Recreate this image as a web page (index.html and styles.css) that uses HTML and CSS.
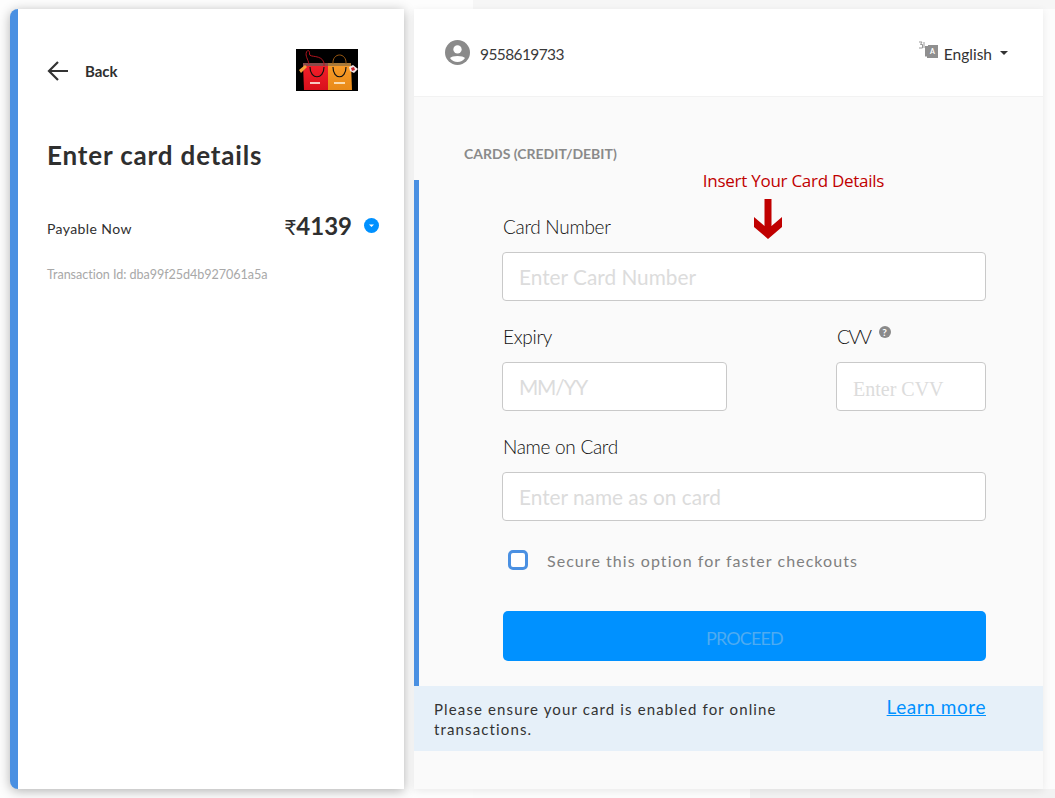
FILE: index.html
```html
<!DOCTYPE html>
<html lang="en">
<head>
<meta charset="utf-8">
<title>Enter card details</title>
<link rel="stylesheet" href="styles.css">
</head>
<body>
<div class="backdrop"></div>
<main class="page">
  <aside class="summary">
    <div class="summary-top">
      <a class="back">
        <svg class="back-icon" viewBox="0 0 22 20" width="22" height="20"><path d="M21 10H2M11 1 2 10l9 9" fill="none" stroke="#333" stroke-width="2.2"/></svg>
        <span>Back</span>
      </a>
      <svg class="logo" viewBox="0 0 62 42" width="62" height="42">
        <defs>
          <linearGradient id="red" x1="0" y1="0" x2="0" y2="1"><stop offset="0" stop-color="#f5202a"/><stop offset="1" stop-color="#d8101c"/></linearGradient>
          <linearGradient id="org" x1="0" y1="0" x2="0" y2="1"><stop offset="0" stop-color="#fa9c28"/><stop offset="1" stop-color="#e88a18"/></linearGradient>
        </defs>
        <rect width="62" height="42" fill="#000"/>
        <path d="M7 15H32V41H8Z" fill="url(#red)"/>
        <path d="M32 15H55L56 41H32Z" fill="url(#org)"/>
        <path d="M7 14H32V17H7Z" fill="#8a4a4a"/>
        <path d="M32 14H55V17H32Z" fill="#a8793a"/>
        <path d="M13 15C12 10 9 7 10.500 3 12 0 14 2 13.500 5 13 9 26 5 28 14V17" fill="none" stroke="#b3141e" stroke-width="1"/>
        <path d="M37 15C36 3 51 3 50 15" fill="none" stroke="#9c5a12" stroke-width="1"/>
        <path d="M14 18C14 31 28 31 28 18M37 18C37 31 50 31 50 18" fill="none" stroke="#111" stroke-width="1.200"/>
        <path d="M3 21 9 16 11 18 5 24Z" fill="#f2a33c"/>
        <path d="M53 18 57 16 62 20 58 24 54 22Z" fill="#f4e6e6"/>
        <path d="M55 19 58 18 59 21 56 22Z" fill="#c8222a"/>
        <path d="M14 33H24V35H14Z" fill="#f7c9c4"/>
        <path d="M38 33H49V35H38Z" fill="#fbdcae"/>
      </svg>
    </div>
    <h1 class="summary-title">Enter card details</h1>
    <div class="amount-row">
      <span class="amount-label">Payable Now</span>
      <span class="amount-value"><span class="rupee">₹</span>4139</span>
      <span class="amount-toggle"><svg viewBox="0 0 15 15" width="15" height="15"><circle cx="7.500" cy="7.500" r="7.500" fill="#0091ff"/><path d="M5 6.500h5L7.500 9Z" fill="#fff"/></svg></span>
    </div>
    <p class="txn">Transaction Id: dba99f25d4b927061a5a</p>
  </aside>

  <section class="checkout">
    <header class="checkout-head">
      <div class="user">
        <svg viewBox="0 0 24 24" width="25" height="25"><circle cx="12" cy="12" r="12" fill="#8a8a8a"/><circle cx="12" cy="9" r="4" fill="#fff"/><path d="M4.800 17.200C6.500 14.600 17.500 14.600 19.200 17.200 17.500 19.800 15 21 12 21S6.500 19.800 4.800 17.200Z" fill="#fff"/></svg>
        <span>9558619733</span>
      </div>
      <div class="lang">
        <svg class="lang-icon" viewBox="0 0 20 18" width="20" height="18">
          <path d="M1 1H4L2.500 3.500H4.500V7H1M6 1V7" fill="none" stroke="#999" stroke-width="1"/>
          <path d="M7 5H10V4H20V17H9V15.500H7Z" fill="#8f8f8f"/>
          <text class="lang-a" x="14.500" y="13">A</text>
        </svg>
        <span>English</span>
        <span class="caret"></span>
      </div>
    </header>
    <div class="checkout-body">
      <h2 class="method">CARDS (CREDIT/DEBIT)</h2>
      <form class="card-form">
        <div class="hint">
          <span>Insert Your Card Details</span>
          <svg viewBox="0 0 28 40" width="28" height="40"><path d="M10.500 0H17.500V27L28 18V28L14 40 0 28V18L10.500 27Z" fill="#c00000"/></svg>
        </div>
        <label class="field-label" for="num">Card Number</label>
        <input class="field" id="num" placeholder="Enter Card Number">
        <div class="pair">
          <div class="pair-exp">
            <label class="field-label" for="exp">Expiry</label>
            <input class="field field-tight" id="exp" placeholder="MM/YY">
          </div>
          <div class="pair-cvv">
            <label class="field-label" for="cvv"><span class="cvv-text">CVV</span><span class="help">?</span></label>
            <input class="field field-serif" id="cvv" placeholder="Enter CVV">
          </div>
        </div>
        <label class="field-label" for="name">Name on Card</label>
        <input class="field" id="name" placeholder="Enter name as on card">
        <div class="save">
          <span class="box"></span>
          <span>Secure this option for faster checkouts</span>
        </div>
        <button class="proceed" type="button">PROCEED</button>
      </form>
      <div class="notice">
        <p>Please ensure your card is enabled for online transactions.</p>
        <a class="learn">Learn more</a>
      </div>
    </div>
  </section>
</main>
</body>
</html>
```

FILE: styles.css
```css
* { box-sizing: border-box; }
html, body { margin: 0; height: 798px; overflow: hidden; }
body { background: linear-gradient(#f6f6f6 0 9px, transparent 9px), linear-gradient(to right, transparent 750px, #f2f2f2 750px) bottom / 100% 9px no-repeat, #fcfcfc; font-family: Lato, "Noto Sans", sans-serif; color: #2f2f2f; position: relative; }
.backdrop { position: absolute; left: 0; top: 0; width: 473px; height: 100%; background: #fdfdfd; }
.page { position: relative; display: flex; gap: 10px; height: 780px; margin: 9px 13px 9px 10px; }

.summary { width: 394px; flex: none; background: #fff; border-left: 8px solid #4a90e2; border-radius: 8px 0 0 8px; padding: 0 25px 0 29px; box-shadow: 0 2px 12px rgba(0,0,0,.3); }
.summary-top { display: flex; justify-content: space-between; height: 82px; padding-top: 40px; align-items: flex-start; padding-right: 21px; }
.back { display: flex; align-items: center; gap: 16px; font-size: 15px; font-weight: 700; height: 43px; }
.logo { display: block; }
.summary-title { margin: 46px 0 0; font-size: 26px; font-weight: 700; line-height: 36px; letter-spacing: .85px; }
.amount-row { display: flex; align-items: center; margin-top: 37px; height: 30px; }
.amount-label { font-size: 14px; flex: 1; letter-spacing: .4px; padding-top: 7px; }
.amount-value { font-size: 24px; font-weight: 700; }
.rupee { font-size: 21px; font-weight: 400; }
.amount-toggle { margin-left: 12px; display: flex; }
.txn { margin: 26px 0 0; font-size: 12.600px; color: #a8a8a8; font-weight: 400; letter-spacing: -.05px; line-height: 18px; }

.checkout { flex: 1; background: #fafafa; display: flex; flex-direction: column; box-shadow: 0 2px 8px rgba(0,0,0,.08); }
.checkout-head { height: 88px; flex: none; background: #fff; border-bottom: 1px solid #f2f2f2; display: flex; align-items: center; justify-content: space-between; padding: 2px 35px 0 31px; }
.user { display: flex; align-items: center; gap: 10px; font-size: 15.500px; letter-spacing: -.6px; color: #3a3a3a; }
.user svg { display: block; margin-top: -3px; }
.lang { display: flex; align-items: center; font-size: 15.500px; color: #333; }
.lang-icon { display: block; margin: -7px 6px 0 0; }
.lang-a { font: 700 7px Lato, sans-serif; fill: #fff; text-anchor: middle; }
.caret { width: 0; height: 0; margin-left: 8px; margin-top: -2px; border: 4px solid transparent; border-top-color: #333; border-bottom: 0; }

.checkout-body { flex: 1; display: flex; flex-direction: column; }
.method { margin: 48px 0 0 50px; font-size: 14px; line-height: 18px; font-weight: 700; color: #8a8a8a; height: 35px; }
.card-form { position: relative; width: 100%; height: 506px; border-left: 5px solid #4a90e2; padding: 35px 57px 0 83px; }
.hint { position: absolute; left: 283px; top: -10px; width: 183px; display: flex; flex-direction: column; align-items: center; color: #c00000; font: 17px/22px "Open Sans", sans-serif; letter-spacing: -.27px; white-space: nowrap; gap: 7px; }
.hint svg { display: block; margin-left: -51px; }
.field-label { display: block; height: 24px; margin-left: 1px; font-size: 19px; letter-spacing: -.3px; line-height: 24px; font-weight: 300; color: #111; margin-bottom: 13px; }
.field { display: block; width: 100%; height: 49px; border: 1px solid #c9c9c9; border-radius: 4px; background: #fff; padding: 0 16px; font: 20.800px Lato, sans-serif; color: #333; outline: 0; }
.field::placeholder { color: #dcdcdc; opacity: 1; }
.field-tight { letter-spacing: -1.200px; }
.field-serif { font: 20px "Liberation Serif", serif; padding-top: 5px; }
.pair { display: flex; justify-content: space-between; margin-top: 24px; margin-bottom: 24px; }
.pair-exp { width: 225px; }
.pair-cvv { width: 150px; }
.cvv-text { letter-spacing: -1.400px; }
.help { display: inline-block; width: 12px; height: 12px; margin-left: 8px; border-radius: 50%; background: #8a8a8a; color: #fff; font-size: 10px; line-height: 12px; text-align: center; font-weight: 700; letter-spacing: 0; vertical-align: 8px; }
.save { display: flex; align-items: center; gap: 19px; margin: 29px 0 0 6px; height: 20px; font-size: 16px; letter-spacing: 1.050px; color: #808080; }
.box { width: 20px; height: 20px; border: 3px solid #4a90e2; border-radius: 5px; background: #fff; flex: none; }
.proceed { display: block; width: 483px; height: 50px; margin: 41px 0 0 1px; padding-top: 4px; border: 0; border-radius: 5px; background: #0091ff; color: #4eabf1; font: 18px Lato, sans-serif; letter-spacing: -.85px; }
.notice { height: 65px; background: #e6f0f9; display: flex; justify-content: space-between; padding: 13px 57px 0 20px; }
.notice p { margin: 0; width: 380px; font-size: 15px; line-height: 20px; letter-spacing: 1.130px; color: #333; }
.learn { font-size: 19px; line-height: 20px; letter-spacing: .55px; margin-top: -2px; color: #0091ff; text-decoration: underline; }
```
